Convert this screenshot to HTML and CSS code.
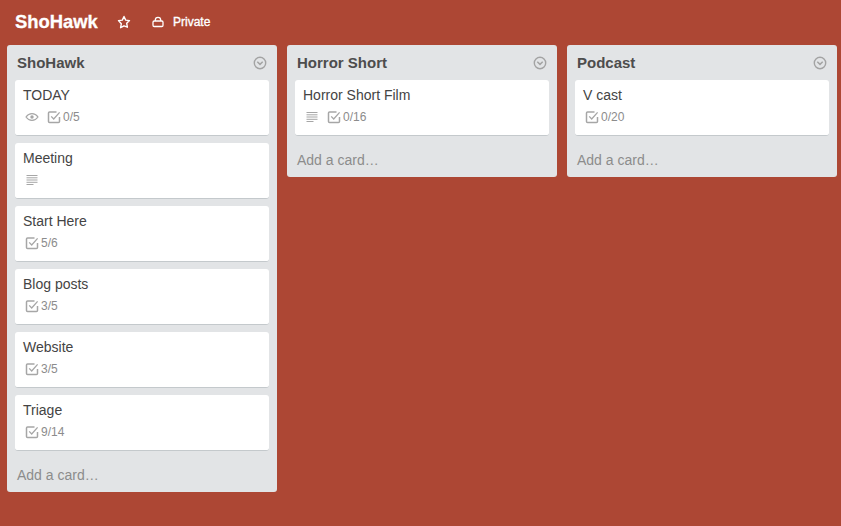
FILE: index.html
```html
<!DOCTYPE html>
<html lang="en">
<head>
<meta charset="utf-8">
<title>ShoHawk</title>
<link rel="stylesheet" href="styles.css">
</head>
<body>
<svg class="defs" width="0" height="0" aria-hidden="true">
  <symbol id="i-check" viewBox="0 0 14 14"><path d="M9.500 2H2.600C1.900 2 1.500 2.400 1.500 3v8.500c0 .6.400 1 1.100 1h8.800c.7 0 1.100-.4 1.100-1V7" fill="none" stroke="currentColor" stroke-width="1.500"/><path d="M4.200 6.400l2.500 2.600L12.600 2.400" fill="none" stroke="currentColor" stroke-width="1.300"/></symbol>
  <symbol id="i-desc" viewBox="0 0 14 14"><path d="M1.500 2.500h11M1.500 4.800h11M1.500 7h11M1.500 9.300h11M1.500 11.500h7" fill="none" stroke="currentColor" stroke-width="1"/></symbol>
  <symbol id="i-eye" viewBox="0 0 14 14"><path d="M1 7c1.600-2.300 3.600-3.400 6-3.400s4.400 1.100 6 3.400c-1.600 2.300-3.600 3.400-6 3.400S2.600 9.300 1 7z" fill="none" stroke="currentColor" stroke-width="1.200"/><circle cx="7" cy="7" r="1.700" fill="currentColor"/></symbol>
  <symbol id="i-menu" viewBox="0 0 14 14"><circle cx="7" cy="7" r="5.700" fill="none" stroke="currentColor" stroke-width="1.400"/><path d="M4.300 5.800L7 8.400l2.700-2.600" fill="none" stroke="currentColor" stroke-width="1.500"/></symbol>
</svg>

<header class="board-header">
  <h1 class="board-name">ShoHawk</h1>
  <svg class="star" viewBox="0 0 14 14" aria-hidden="true"><path d="M7 1.500l1.700 3.600 3.800.5-2.800 2.700.7 3.900L7 10.800l-3.400 1.900.7-3.900L1.500 5.600l3.800-.5z" fill="none" stroke="currentColor" stroke-width="1.400" stroke-linejoin="round"/></svg>
  <svg class="lock" viewBox="0 0 12 12" aria-hidden="true"><rect x="1" y="5" width="10" height="5.500" rx="1.200" fill="none" stroke="currentColor" stroke-width="1.300"/><path d="M3.300 5V4a2.700 2.700 0 0 1 5.400 0v1" fill="none" stroke="currentColor" stroke-width="1.300"/></svg>
  <span class="privacy">Private</span>
</header>

<main class="board">
  <section class="list">
    <div class="list-head"><h2 class="list-title">ShoHawk</h2><svg class="list-menu"><use href="#i-menu"/></svg></div>
    <div class="cards">
      <article class="card"><div class="card-title">TODAY</div><div class="badges"><svg class="ico"><use href="#i-eye"/></svg><span class="badge"><svg class="ico"><use href="#i-check"/></svg>0/5</span></div></article>
      <article class="card"><div class="card-title">Meeting</div><div class="badges"><svg class="ico"><use href="#i-desc"/></svg></div></article>
      <article class="card"><div class="card-title">Start Here</div><div class="badges"><span class="badge"><svg class="ico"><use href="#i-check"/></svg>5/6</span></div></article>
      <article class="card"><div class="card-title">Blog posts</div><div class="badges"><span class="badge"><svg class="ico"><use href="#i-check"/></svg>3/5</span></div></article>
      <article class="card"><div class="card-title">Website</div><div class="badges"><span class="badge"><svg class="ico"><use href="#i-check"/></svg>3/5</span></div></article>
      <article class="card"><div class="card-title">Triage</div><div class="badges"><span class="badge"><svg class="ico"><use href="#i-check"/></svg>9/14</span></div></article>
    </div>
    <div class="add-card">Add a card…</div>
  </section>

  <section class="list">
    <div class="list-head"><h2 class="list-title">Horror Short</h2><svg class="list-menu"><use href="#i-menu"/></svg></div>
    <div class="cards">
      <article class="card"><div class="card-title">Horror Short Film</div><div class="badges"><svg class="ico"><use href="#i-desc"/></svg><span class="badge"><svg class="ico"><use href="#i-check"/></svg>0/16</span></div></article>
    </div>
    <div class="add-card">Add a card…</div>
  </section>

  <section class="list">
    <div class="list-head"><h2 class="list-title">Podcast</h2><svg class="list-menu"><use href="#i-menu"/></svg></div>
    <div class="cards">
      <article class="card"><div class="card-title">V cast</div><div class="badges"><span class="badge"><svg class="ico"><use href="#i-check"/></svg>0/20</span></div></article>
    </div>
    <div class="add-card">Add a card…</div>
  </section>
</main>
</body>
</html>
```

FILE: styles.css
```css
* { box-sizing: border-box; }
html, body { height: 100%; }
body {
  margin: 0;
  background: #ad4734;
  font-family: "Liberation Sans", Arial, sans-serif;
  color: #444;
  overflow: hidden;
}
.defs { position: absolute; }

.board-header {
  height: 45px;
  display: flex;
  align-items: center;
  padding: 0 0 1px 15px;
  color: #fff;
}
.board-name { margin: 0; width: 83px; font-size: 18.4px; line-height: 22px; font-weight: 700; -webkit-text-stroke: 0.3px #fff; white-space: nowrap; }
.star { width: 14px; height: 14px; margin-left: 19px; }
.lock { width: 12px; height: 12px; margin-left: 21px; }
.privacy { margin-left: 9px; font-size: 12px; font-weight: 400; -webkit-text-stroke: 0.35px #fff; }

.board { display: flex; align-items: flex-start; gap: 10px; padding: 0 0 0 7px; }
.list { width: 270px; flex: none; background: #e2e4e6; border-radius: 3px; }
.list-head { height: 35px; display: flex; align-items: center; justify-content: space-between; padding: 0 10px 0 10px; }
.list-title { margin: 0; font-size: 15px; line-height: 18px; font-weight: 700; color: #4d4d4d; }
.list-menu { width: 14px; height: 14px; color: #a3a3a3; margin-top: 1px; }

.cards { display: flex; flex-direction: column; gap: 7px; padding: 0 8px; }
.card {
  height: 56px;
  background: #fff;
  border-radius: 3px;
  border-bottom: 1px solid #c4c9cc;
  padding: 6px 8px 0;
}
.card-title { font-size: 14px; line-height: 18px; color: #444; }
.badges { display: flex; align-items: center; gap: 8px; height: 20px; margin-top: 3px; padding-left: 2px; color: #8c8c8c; }
.badge { display: flex; align-items: center; gap: 2px; font-size: 12px; line-height: 14px; }
.ico { width: 14px; height: 14px; flex: none; color: #a6a6a6; }

.add-card { height: 41px; padding: 15px 0 0 10px; font-size: 14px; line-height: 18px; color: #8c8c8c; }
```
